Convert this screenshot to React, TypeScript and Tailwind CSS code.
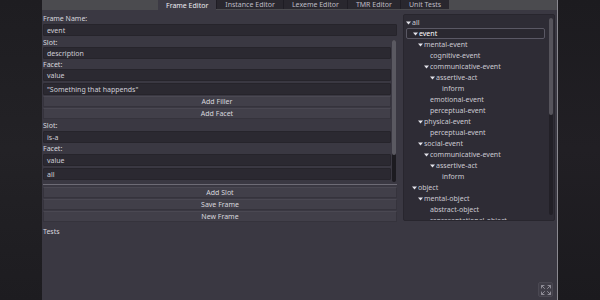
import React from 'react';
import { Expand } from 'lucide-react';

const tabs = ['Frame Editor', 'Instance Editor', 'Lexeme Editor', 'TMR Editor', 'Unit Tests'];

interface TreeItem {
  label: string;
  depth: number;
  open?: boolean;
  selected?: boolean;
}

const tree: TreeItem[] = [
  { label: 'all', depth: 0, open: true },
  { label: 'event', depth: 1, open: true, selected: true },
  { label: 'mental-event', depth: 2, open: true },
  { label: 'cognitive-event', depth: 3 },
  { label: 'communicative-event', depth: 3, open: true },
  { label: 'assertive-act', depth: 4, open: true },
  { label: 'inform', depth: 5 },
  { label: 'emotional-event', depth: 3 },
  { label: 'perceptual-event', depth: 3 },
  { label: 'physical-event', depth: 2, open: true },
  { label: 'perceptual-event', depth: 3 },
  { label: 'social-event', depth: 2, open: true },
  { label: 'communicative-event', depth: 3, open: true },
  { label: 'assertive-act', depth: 4, open: true },
  { label: 'inform', depth: 5 },
  { label: 'object', depth: 1, open: true },
  { label: 'mental-object', depth: 2, open: true },
  { label: 'abstract-object', depth: 3 },
  { label: 'representational-object', depth: 3 },
];

const Label = ({ text, h = 'h-[10px]' }: { text: string; h?: string }) => (
  <div className={`${h} flex items-center text-[#d8d7de] leading-none`}>{text}</div>
);

const Field = ({ value }: { value: string }) => (
  <div className="h-[12px] flex items-center px-[3px] bg-[#2b2931] border border-[#26242b] rounded-[1px] text-[#cfced6] leading-none">
    {value}
  </div>
);

const Button = ({ text }: { text: string }) => (
  <div className="h-[11px] flex items-center justify-center bg-[#413f49] border border-[#35333c] border-t-[#4a4852] rounded-[1px] text-[#d8d7de] leading-none">
    {text}
  </div>
);

const Arrow = () => (
  <svg width="5" height="4" viewBox="0 0 5 4" className="mr-[1px] shrink-0">
    <path d="M0 0.5 H5 L2.5 3.5 Z" fill="#e4e3ea" />
  </svg>
);

export default function App() {
  return (
    <div
      className="w-[600px] h-[300px] flex overflow-hidden text-[7px]"
      style={{ fontFamily: '"Noto Sans", "DejaVu Sans", sans-serif' }}
    >
      <div className="w-[42px] h-full bg-gradient-to-b from-[#1e1d21] via-[#232226] to-[#1d1c20]" />

      <div className="w-[515px] h-full flex flex-col bg-[#3a3842]">
        {/* tab bar */}
        <div className="h-[10px] flex bg-[#4b4b4f]">
          <div className="w-[116px]" />
          {tabs.map((t, i) => (
            <div
              key={t}
              className={`px-[8px] flex items-center leading-none ${
                i === 0
                  ? 'h-[10px] bg-[#3c3a44] text-[#ecebf0]'
                  : 'h-[9px] bg-[#29272e] text-[#bdbcc4] border-l border-[#1f1d24]'
              }`}
            >
              {t}
            </div>
          ))}
        </div>

        <div className="flex pt-[3px] pl-[1px]">
          {/* left column */}
          <div className="w-[354px] flex flex-col">
            <Label text="Frame Name:" h="h-[11px]" />
            <Field value="event" />
            <div className="flex mt-[1px]">
              <div className="w-[348px] flex flex-col">
                <Label text="Slot:" />
                <Field value="description" />
                <Label text="Facet:" />
                <Field value="value" />
                <div className="h-[2px]" />
                <Field value={'"Something that happends"'} />
                <div className="h-[1px]" />
                <Button text="Add Filler" />
                <div className="h-[1px]" />
                <Button text="Add Facet" />
                <Label text="Slot:" h="h-[12px]" />
                <Field value="is-a" />
                <Label text="Facet:" h="h-[11px]" />
                <Field value="value" />
                <div className="h-[2px]" />
                <Field value="all" />
              </div>
              <div className="ml-[1px] w-[4px] h-[142px] mt-[3px] rounded-[2px] bg-[#1c1b20] flex flex-col">
                <div className="h-[115px] rounded-[2px] bg-[#5a5961]" />
              </div>
            </div>
            <div className="h-[1px] mt-[2px] bg-[#6d6b75]" />
            <div className="flex flex-col gap-[1px] mt-[2px]">
              <Button text="Add Slot" />
              <Button text="Save Frame" />
              <Button text="New Frame" />
            </div>
          </div>

          {/* tree */}
          <div className="ml-[6px] w-[152px] h-[207px] mt-[1px] bg-[#2e2c35] border border-[#28262e] rounded-[2px] flex">
            <div className="flex-1 flex flex-col pt-[2px] pl-[2px] overflow-hidden">
              {tree.map((item, i) => (
                <div
                  key={i}
                  className={`h-[11px] shrink-0 flex items-center leading-none whitespace-nowrap ${
                    item.selected
                      ? 'bg-[#2a2830] border border-[#5a5864] rounded-[2px] text-white mr-[4px]'
                      : 'text-[#cbcad2]'
                  }`}
                  style={{ paddingLeft: item.depth * 6 + (item.open ? 0 : 6) }}
                >
                  {item.open && <Arrow />}
                  {item.label}
                </div>
              ))}
            </div>
            <div className="w-[4px] mr-[1px] mt-[3px] mb-[5px] rounded-[2px] bg-[#222027] flex flex-col">
              <div className="h-[97px] rounded-[2px] bg-[#56545c]" />
            </div>
          </div>
        </div>

        <div className="pl-[1px] mt-[4px] h-[10px] flex items-center text-[#d8d7de] leading-none">Tests</div>

        <div className="flex-1 flex items-end justify-end pr-[4px] pb-[3px]">
          <div className="w-[15px] h-[15px] rounded-[2px] bg-[#403e48] border border-[#4a4852] flex items-center justify-center">
            <Expand size={12} strokeWidth={2} color="#8e8c96" />
          </div>
        </div>
      </div>

      <div className="w-[1px] h-full bg-[#8a8990]" />
      <div className="flex-1 h-full bg-gradient-to-b from-[#1c1b1f] via-[#211f24] to-[#1b1a1e]" />
    </div>
  );
}
